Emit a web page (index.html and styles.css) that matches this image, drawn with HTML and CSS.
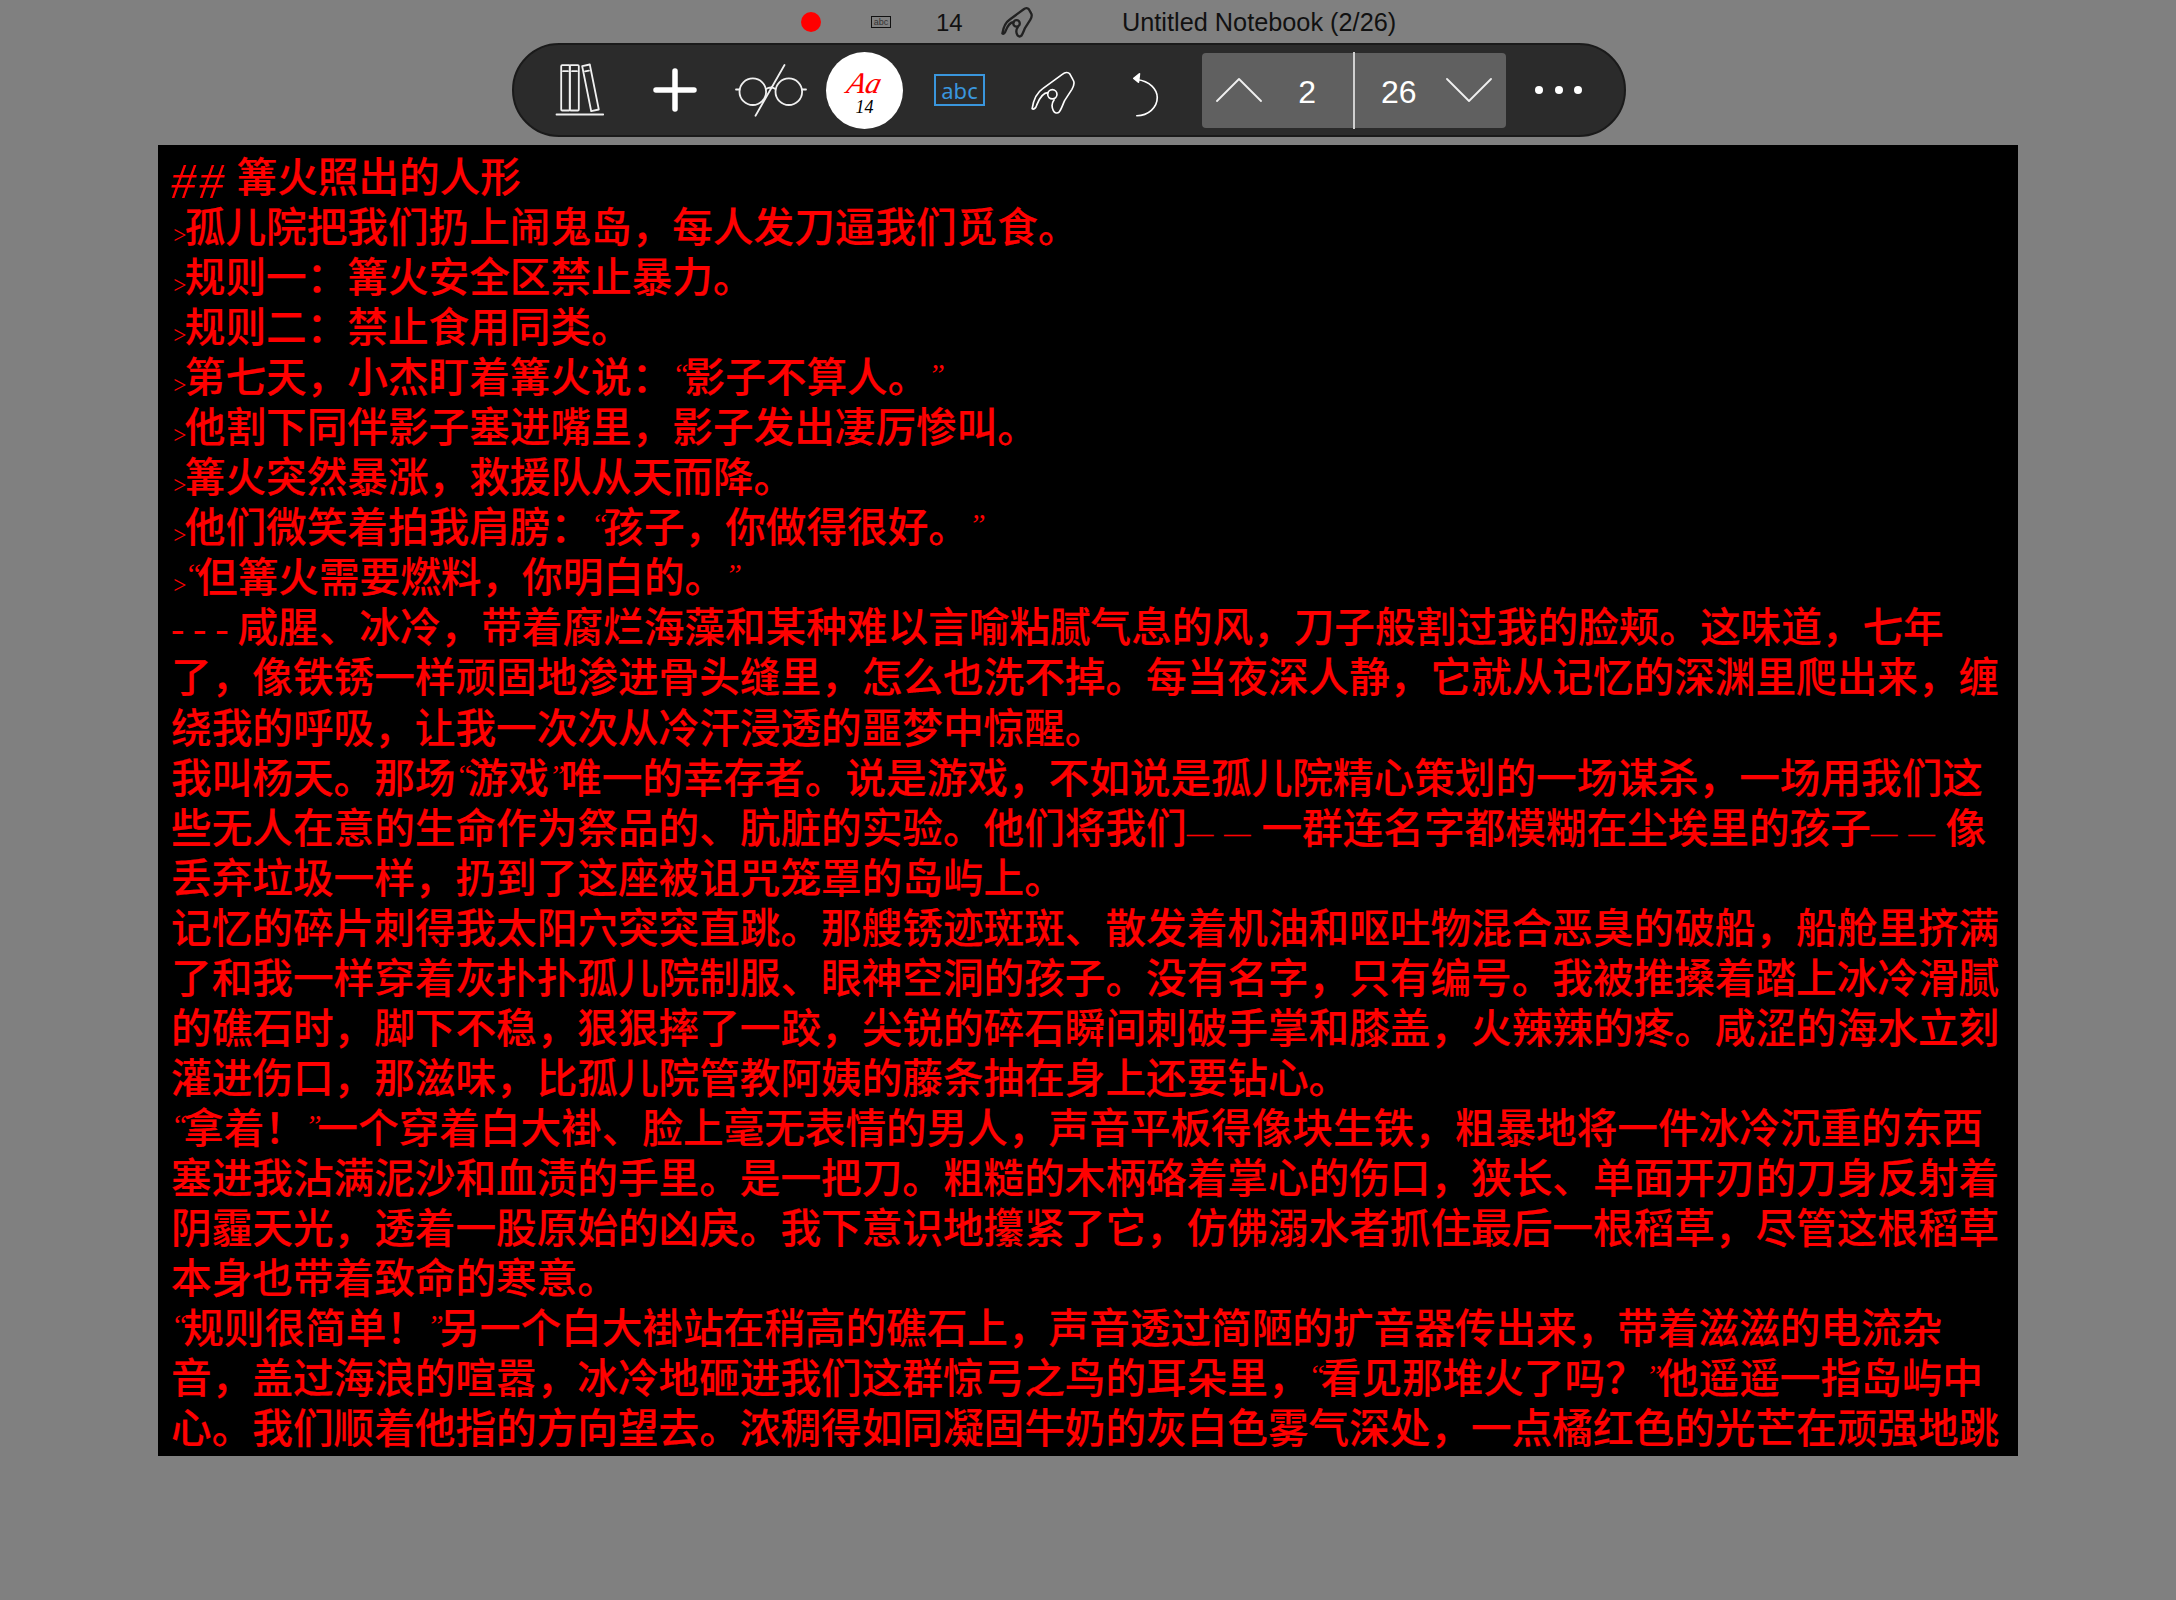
FILE: index.html
```html
<!DOCTYPE html>
<html lang="zh-CN">
<head>
    <meta charset="UTF-8">
    <meta name="viewport" content="width=device-width, initial-scale=1.0">
    <title>Untitled Notebook</title>
    <link rel="stylesheet" href="styles.css">
</head>
<body>
    <!-- 顶部状态行 -->
    <div class="status">
        <span class="status-dot"></span>
        <span class="status-abc">abc</span>
        <span class="status-size">14</span>
        <svg class="status-hand" viewBox="630 58 138 138"><path d="M636 176C640 150 650 128 668 116L728 72C735 66 745 65 750 72L760 90C766 100 762 108 756 118L734 152C728 165 724 178 718 186C712 192 704 190 700 182C694 170 696 158 702 150M684 128C672 128 660 140 650 165C647 175 640 180 636 176"/><circle cx="697" cy="133" r="14"/></svg>
        <span class="status-title">Untitled Notebook (2/26)</span>
    </div>

    <!-- 工具栏 -->
    <div class="toolbar">
        <div class="tool">
            <svg class="ico" width="60" height="60" viewBox="0 0 60 60">
                <rect x="11.2" y="5.2" width="8.6" height="45.3" rx="1"/>
                <rect x="19.8" y="5.2" width="9" height="45.3" rx="1"/>
                <path d="M32.2 6.2L39.8 4.5L48.8 49.5L41.2 51.2Z"/>
                <path d="M13 11.2H18M22 11.2H27M35 11.4L39 10.6M6.5 54.5H53.2"/>
            </svg>
        </div>
        <div class="tool">
            <svg class="ico ico-plus" width="48" height="48" viewBox="0 0 48 48"><path d="M24 5V43M5 24H43"/></svg>
        </div>
        <div class="tool">
            <svg class="ico" width="80" height="60" viewBox="-1 0 80 60">
                <circle cx="21.8" cy="31.7" r="13.3"/>
                <circle cx="57.8" cy="31.7" r="13.3"/>
                <path d="M35 29Q40 26 44.500 29M5 29.500H8.500M71 29.500H75M53.500 5L24.500 55.700"/>
            </svg>
        </div>
        <div class="tool">
            <div class="pen">
                <span class="pen-aa">Aa</span>
                <span class="pen-size">14</span>
            </div>
        </div>
        <div class="tool"><span class="abc">abc</span></div>
        <div class="tool">
            <svg class="ico ico-hand" width="53" height="47" viewBox="623.5 51.5 160 140"><path d="M636 176C640 150 650 128 668 116L728 72C735 66 745 65 750 72L760 90C766 100 762 108 756 118L734 152C728 165 724 178 718 186C712 192 704 190 700 182C694 170 696 158 702 150M684 128C672 128 660 140 650 165C647 175 640 180 636 176"/><circle cx="697" cy="133" r="14"/></svg>
        </div>
        <div class="tool">
            <svg class="ico ico-hand" width="33" height="53" viewBox="938.500 38.500 100 160"><path d="M950 85C990 90 1012 115 1012 140C1012 170 985 195 950 195"/><path class="ico-fill" d="M941 82L958 68L955 93Z"/></svg>
        </div>
        <div class="pager">
            <div class="pager-half pager-prev">
                <svg class="ico" width="46" height="26" viewBox="0 0 46 26"><path d="M1 24L23 2L45 24"/></svg>
                <span>2</span>
            </div>
            <div class="pager-line"></div>
            <div class="pager-half pager-next">
                <span>26</span>
                <svg class="ico" width="46" height="26" viewBox="0 0 46 26"><path d="M1 2L23 24L45 2"/></svg>
            </div>
        </div>
        <div class="more"><i></i><i></i><i></i></div>
    </div>

    <!-- 正文 -->
    <div class="page">
        <div class="line"><span class="hash">## </span>篝火照出的人形</div>
        <div class="line"><span class="gt">&gt;</span>孤儿院把我们扔上闹鬼岛，每人发刀逼我们觅食。</div>
        <div class="line"><span class="gt">&gt;</span>规则一：篝火安全区禁止暴力。</div>
        <div class="line"><span class="gt">&gt;</span>规则二：禁止食用同类。</div>
        <div class="line"><span class="gt">&gt;</span>第七天，小杰盯着篝火说：<span class="q">“</span>影子不算人。<span class="q">”</span></div>
        <div class="line"><span class="gt">&gt;</span>他割下同伴影子塞进嘴里，影子发出凄厉惨叫。</div>
        <div class="line"><span class="gt">&gt;</span>篝火突然暴涨，救援队从天而降。</div>
        <div class="line"><span class="gt">&gt;</span>他们微笑着拍我肩膀：<span class="q">“</span>孩子，你做得很好。<span class="q">”</span></div>
        <div class="line"><span class="gt">&gt;</span><span class="q">“</span>但篝火需要燃料，你明白的。<span class="q">”</span></div>
        <div class="line"><span class="rule">---</span>咸腥、冰冷，带着腐烂海藻和某种难以言喻粘腻气息的风，刀子般割过我的脸颊。这味道，七年了，像铁锈一样顽固地渗进骨头缝里，怎么也洗不掉。每当夜深人静，它就从记忆的深渊里爬出来，缠绕我的呼吸，让我一次次从冷汗浸透的噩梦中惊醒。</div>
        <div class="line">我叫杨天。那场<span class="q">“</span>游戏<span class="q">”</span>唯一的幸存者。说是游戏，不如说是孤儿院精心策划的一场谋杀，一场用我们这些无人在意的生命作为祭品的、肮脏的实验。他们将我们<span class="dash">——</span>一群连名字都模糊在尘埃里的孩子<span class="dash">——</span>像丢弃垃圾一样，扔到了这座被诅咒笼罩的岛屿上。</div>
        <div class="line">记忆的碎片刺得我太阳穴突突直跳。那艘锈迹斑斑、散发着机油和呕吐物混合恶臭的破船，船舱里挤满了和我一样穿着灰扑扑孤儿院制服、眼神空洞的孩子。没有名字，只有编号。我被推搡着踏上冰冷滑腻的礁石时，脚下不稳，狠狠摔了一跤，尖锐的碎石瞬间刺破手掌和膝盖，火辣辣的疼。咸涩的海水立刻灌进伤口，那滋味，比孤儿院管教阿姨的藤条抽在身上还要钻心。</div>
        <div class="line"><span class="q">“</span>拿着！<span class="q">”</span>一个穿着白大褂、脸上毫无表情的男人，声音平板得像块生铁，粗暴地将一件冰冷沉重的东西塞进我沾满泥沙和血渍的手里。是一把刀。粗糙的木柄硌着掌心的伤口，狭长、单面开刃的刀身反射着阴霾天光，透着一股原始的凶戾。我下意识地攥紧了它，仿佛溺水者抓住最后一根稻草，尽管这根稻草本身也带着致命的寒意。</div>
        <div class="line"><span class="q">“</span>规则很简单！<span class="q">”</span>另一个白大褂站在稍高的礁石上，声音透过简陋的扩音器传出来，带着滋滋的电流杂音，盖过海浪的喧嚣，冰冷地砸进我们这群惊弓之鸟的耳朵里，<span class="q">“</span>看见那堆火了吗？<span class="q">”</span>他遥遥一指岛屿中心。我们顺着他指的方向望去。浓稠得如同凝固牛奶的灰白色雾气深处，一点橘红色的光芒在顽强地跳</div>
    </div>
</body>
</html>
```

FILE: styles.css
```css
html,body{
    margin:0;
    padding:0;
    height:1600px;
    overflow:hidden;
    background-color:#808080;
    font-family:"Liberation Sans","Noto Sans CJK SC",sans-serif;
}

/* 顶部状态行 */
.status{
    display:flex;
    align-items:center;
    height:43px;
    padding-left:801px;
    box-sizing:border-box;
    color:#111;
}
.status-dot{
    width:20px;
    height:20px;
    border-radius:50%;
    background-color:#ff0000;
}
.status-abc{
    margin-left:50px;
    width:20px;
    height:12px;
    box-sizing:border-box;
    border:1px solid #111;
    font-size:9px;
    line-height:10px;
    text-align:center;
    color:#333;
}
.status-size{
    margin-left:45px;
    padding-top:2px;
    width:27px;
    font-size:24px;
}
.status-hand{
    margin-left:38px;
    width:32px;
    height:32px;
    fill:none;
    stroke:#222;
    stroke-width:10;
    stroke-linecap:round;
    stroke-linejoin:round;
}
.status-title{
    margin-left:89px;
    padding-top:2px;
    font-size:25.3px;
}

/* 工具栏 */
.toolbar{
    display:flex;
    align-items:center;
    box-sizing:border-box;
    width:1114px;
    height:94px;
    margin-left:512px;
    padding-left:18px;
    background-color:#2b2b2b;
    border:2px solid #1a1a1a;
    border-radius:47px;
}
.tool{
    display:flex;
    align-items:center;
    justify-content:center;
    width:95px;
    height:90px;
    flex:none;
}
.ico{
    fill:none;
    stroke:#f0f0f0;
    stroke-width:1.8;
    stroke-linecap:round;
    stroke-linejoin:round;
}
.ico-plus{
    stroke:#fff;
    stroke-width:5.5;
}
.ico-hand{
    stroke:#fff;
    stroke-width:5;
}
.ico-fill{
    fill:#fff;
}
.pen{
    display:flex;
    flex-direction:column;
    align-items:center;
    width:77px;
    height:77px;
    border-radius:50%;
    background-color:#fff;
}
.pen-aa{
    margin-top:16px;
    font-family:"Liberation Serif",serif;
    font-style:italic;
    font-size:30px;
    line-height:30px;
    color:#ff0000;
    transform:skewX(-14deg);
}
.pen-size{
    margin-top:1px;
    font-family:"Liberation Serif",serif;
    font-style:italic;
    font-size:18px;
    line-height:17px;
    color:#000;
}
.abc{
    box-sizing:border-box;
    width:51px;
    height:32px;
    border:2.5px solid #3a96dd;
    font-family:"Noto Sans",sans-serif;
    font-size:22px;
    line-height:28px;
    text-align:center;
    color:#3a96dd;
}
.pager{
    display:flex;
    align-items:center;
    flex:none;
    width:304px;
    height:75px;
    margin-left:5px;
    background-color:#606060;
    border-radius:4px;
    color:#fff;
    font-size:32px;
}
.pager-half{
    display:flex;
    align-items:center;
    justify-content:space-between;
    flex:none;
    box-sizing:border-box;
}
.pager-half span{
    padding-top:4px;
}
.pager-prev{
    width:151px;
    padding-left:14px;
    padding-right:37px;
}
.pager-next{
    width:151px;
    padding-left:26px;
    padding-right:14px;
}
.pager-line{
    flex:none;
    width:2px;
    height:77px;
    background-color:#d0d0d0;
}
.more{
    display:flex;
    gap:11.5px;
    margin-left:29px;
}
.more i{
    width:8px;
    height:8px;
    border-radius:50%;
    background-color:#fff;
}

/* 正文 */
.page{
    box-sizing:border-box;
    width:1860px;
    height:1311px;
    margin-top:8px;
    margin-left:158px;
    padding:5px 14px 0 13px;
    overflow:hidden;
    background-color:#000;
    color:#ff0000;
    font-family:"Noto Sans CJK SC",sans-serif;
    font-weight:500;
    font-size:40.63px;
    line-height:50.05px;
    text-spacing-trim:space-all;
    -webkit-text-stroke:0.15px #ff0000;
}
.page span{
    font-family:"Liberation Serif",serif;
    font-style:italic;
    font-weight:400;
    line-height:0;
    -webkit-text-stroke:0;
}
.page .hash{
    font-size:50px;
    letter-spacing:3px;
    word-spacing:-6px;
    vertical-align:-6px;
}
.page .gt{
    font-family:"Lato",sans-serif;
    font-style:normal;
    font-weight:300;
    font-size:29px;
    letter-spacing:-3px;
    vertical-align:-3px;
}
.page .q{
    font-size:30px;
    letter-spacing:-4.5px;
    vertical-align:8px;
}
.page .rule{
    font-size:40px;
    letter-spacing:8.8px;
}
.page .dash{
    font-size:30px;
    letter-spacing:10.7px;
}
```
